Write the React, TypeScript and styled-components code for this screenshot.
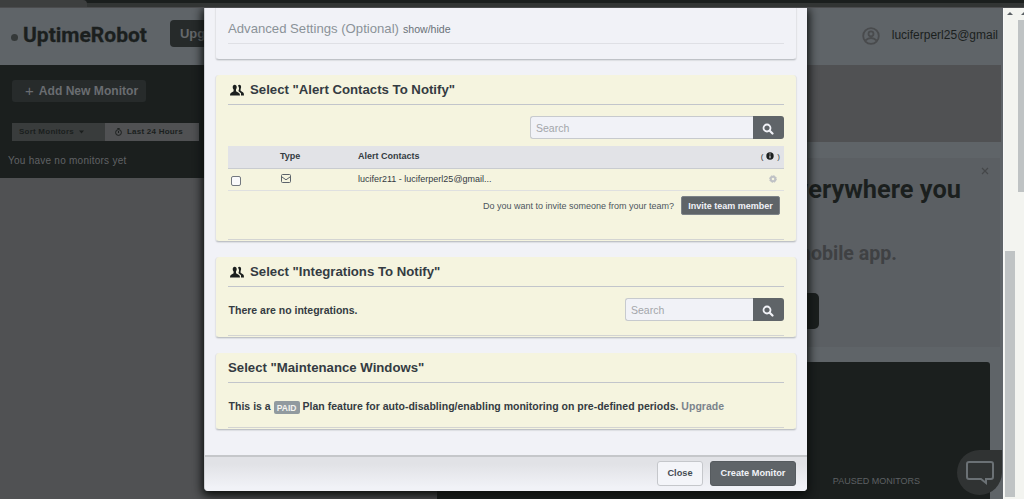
import React from "react";
import styled, { createGlobalStyle } from "styled-components";

const c = {
  ink: "#1b1f1e",
  coal: "#505153",
  slate: "#5f6468",
  paper: "#f1f2f7",
  mist: "#e2e3e7",
  line: "#c2c5cb",
  cream: "#f5f4df",
  text: "#343b42",
};

const Global = createGlobalStyle`
  * { box-sizing: border-box; }
  html, body { margin: 0; padding: 0; overflow: hidden; }
  body { font-family: "Liberation Sans", Arial, sans-serif; color: ${c.text}; }
  h1, h2, h3, p { margin: 0; }
  button, input { font-family: inherit; }
`;

const Screen = styled.div`
  position: relative;
  display: flex;
  flex-direction: column;
  width: 1024px;
  height: 499px;
  overflow: hidden;
  background: ${c.slate};
`;

const BrowserEdge = styled.div`
  flex: none;
  display: flex;
  height: 8px;
  background: linear-gradient(${c.ink} 0 3px, #323534 3px 7px, #4b4c4e 7px);
`;
const BrowserTab = styled.div`
  width: 87px;
  height: 7px;
  background: #3d3f3f;
  border-top-right-radius: 4px;
`;

const Viewport = styled.div`
  flex: 1;
  min-height: 0;
  display: flex;
`;

const Page = styled.div`
  width: 1003px;
  display: flex;
  flex-direction: column;
`;

const Header = styled.header`
  flex: none;
  height: 57px;
  padding: 0 5px 3px 11px;
  display: flex;
  align-items: center;
  background: ${c.slate};
`;
const LogoDot = styled.span`
  width: 7px;
  height: 7px;
  margin: 5px 5px 0 0;
  border-radius: 50%;
  background: #353939;
`;
const Logo = styled.span`
  font: 700 21px/26px Roboto, sans-serif;
  -webkit-text-stroke: 0.3px ${c.ink};
  color: ${c.ink};
`;
const UpgradeButton = styled.span`
  margin: -3px 0 0 23px;
  width: 110px;
  height: 27px;
  padding-left: 10px;
  border-radius: 4px;
  background: #262a2a;
  color: #65686b;
  font: 700 13px/27px "Liberation Sans", sans-serif;
`;
const Account = styled.div`
  margin-left: auto;
  display: flex;
  align-items: center;
  gap: 12px;
  font: 400 12px/16px "Liberation Sans", sans-serif;
  color: ${c.ink};
  svg { display: block; margin-top: 2px; }
`;

const Columns = styled.div`
  flex: 1;
  display: flex;
  min-height: 0;
`;
const Sidebar = styled.aside`
  width: 437px;
  background: ${c.coal};
`;
const SidebarTop = styled.div`
  height: 113px;
  padding: 15px 0 0 12px;
  background: ${c.ink};
`;
const AddMonitor = styled.div`
  width: 134px;
  height: 22px;
  padding-left: 13px;
  display: flex;
  align-items: center;
  gap: 5px;
  border-radius: 3px;
  background: #272b2b;
  color: #6a6d71;
  font: 700 12.1px/22px "Liberation Sans", sans-serif;
  span { font-size: 15px; font-weight: 400; }
`;
const Filters = styled.div`
  display: flex;
  margin-top: 21px;
  font: 700 8px/18px "Liberation Sans", sans-serif;
  letter-spacing: 0.23px;
  color: ${c.ink};
`;
const Filter = styled.div<{ $w: number; $dim?: boolean }>`
  display: flex;
  align-items: center;
  gap: 5px;
  width: ${(p) => p.$w}px;
  height: 18px;
  padding-left: ${(p) => (p.$dim ? 7 : 10)}px;
  background: ${(p) => (p.$dim ? "#393c3c" : c.coal)};
  white-space: nowrap;
`;
const EmptyNote = styled.p`
  margin: 13px 0 0 -4px;
  font: 400 10px/14px "Liberation Sans", sans-serif;
  letter-spacing: 0.25px;
  color: #606265;
`;

const Main = styled.main`
  flex: 1;
  display: flex;
  flex-direction: column;
  align-items: stretch;
`;
const Banner = styled.div`
  flex: none;
  height: 77px;
  margin-right: 2px;
  background: ${c.coal};
`;
const Promo = styled.section`
  flex: none;
  height: 189px;
  margin: 16px 3px 15px 0;
  padding: 8px 10px 0 0;
  display: flex;
  flex-direction: column;
  background: #5b5f63;
`;
const PromoClose = styled.svg`
  align-self: flex-end;
  display: block;
`;
const PromoTitle = styled.h1`
  width: 514px;
  margin: -2px 0 0 10px;
  text-align: right;
  font: 700 25.4px/30px Roboto, sans-serif;
  white-space: nowrap;
  color: ${c.ink};
`;
const PromoText = styled.p`
  width: 460px;
  margin-top: 38px;
  text-align: right;
  font: 700 19.6px/24px Roboto, sans-serif;
  color: #3f4143;
`;
const StoreButton = styled.div`
  width: 140px;
  height: 36px;
  margin: 27px 0 0 242px;
  border-radius: 5px;
  background: ${c.ink};
`;
const Stats = styled.section`
  flex: 1;
  margin-right: 13px;
  padding: 112px 70px 0 0;
  border-radius: 3px 3px 0 0;
  background: ${c.ink};
  text-align: right;
  font: 400 9px/14px "Liberation Sans", sans-serif;
  color: #5d6063;
`;

const Scrollbars = styled.div`
  width: 21px;
  display: flex;
  gap: 3px;
  padding-left: 1px;
  background: #f3f4f0;
  border-left: 1px solid #f7f8f8;
`;
const Track = styled.div<{ $w: number; $gap: number; $h: number }>`
  flex: none;
  width: ${(p) => p.$w}px;
  overflow: hidden;
  &::before {
    content: "";
    display: block;
    margin: 4px 0 0 ${(p) => (p.$w > 8 ? 2 : 3)}px;
    width: 0;
    border: 3px solid transparent;
    border-top: 0;
    border-bottom-color: #5b6064;
  }
  &::after {
    content: "";
    display: block;
    margin-top: ${(p) => p.$gap}px;
    height: ${(p) => p.$h}px;
    background: #bfc3c4;
  }
`;

const Modal = styled.div`
  position: absolute;
  left: 204px;
  top: 8px;
  width: 603px;
  height: 483px;
  display: flex;
  flex-direction: column;
  background: ${c.paper};
  border-left: 1px solid #cfd1d5;
  border-radius: 0 0 4px 4px;
  box-shadow: 0 3px 10px 2px #0c0f0e;
  clip-path: inset(0 -30px -30px -30px);
`;
const Cards = styled.div`
  flex: 1;
  padding: 0 10px;
`;
const Card = styled.section<{ $h: number; $plain?: boolean }>`
  height: ${(p) => p.$h}px;
  margin-bottom: 15px;
  padding: 0 12px;
  display: flex;
  flex-direction: column;
  background: ${(p) => (p.$plain ? c.paper : c.cream)};
  border: 1px solid ${c.mist};
  border-top: 0;
  border-bottom: 1px solid #bfc2c7;
  border-radius: ${(p) => (p.$plain ? "0 0 4px 4px" : "4px")};
  box-shadow: 0 1px 1px #dcdee2;
  &::after {
    content: "";
    margin-top: auto;
    border-bottom: ${(p) => (p.$plain ? 0 : 1)}px solid #d3d4d2;
    margin-bottom: 1px;
  }
`;
const Advanced = styled.h3`
  display: flex;
  align-items: baseline;
  gap: 4px;
  height: 36px;
  padding-top: 13px;
  border-bottom: 1px solid #dfe0e5;
  font-size: 13.15px;
  line-height: 16px;
  font-weight: 400;
  color: #8b9299;
  small { font-size: 10.6px; color: #6a7178; }
`;
const Title = styled.h2`
  flex: none;
  display: flex;
  align-items: center;
  gap: 6px;
  height: 30px;
  border-bottom: 1px solid ${c.line};
  font-size: 13.2px;
  line-height: 28px;
  font-weight: 700;
  white-space: nowrap;
  svg { display: block; margin-left: 2px; }
`;
const SearchBox = styled.div<{ $w: number }>`
  display: flex;
  width: ${(p) => p.$w}px;
  height: 23px;
`;
const SearchInput = styled.input`
  flex: 1;
  min-width: 0;
  height: 23px;
  padding: 0 5px;
  border: 1px solid #c7cace;
  border-right: 0;
  border-radius: 3px 0 0 3px;
  background: ${c.paper};
  font-size: 10.5px;
  &::placeholder { color: #a3a6aa; opacity: 1; }
`;
const SearchButton = styled.button`
  width: 31px;
  height: 23px;
  padding: 2px 1px 0 0;
  display: flex;
  align-items: center;
  justify-content: center;
  border: 0;
  border-radius: 0 3px 3px 0;
  background: ${c.slate};
`;
const SearchRow = styled.div`
  display: flex;
  justify-content: space-between;
  align-items: center;
  margin-top: 11px;
`;
const Row = styled.div<{ $head?: boolean }>`
  display: grid;
  grid-template-columns: 52px 78px 1fr auto;
  align-items: center;
  height: ${(p) => (p.$head ? 23 : 22)}px;
  margin-top: ${(p) => (p.$head ? 7 : 0)}px;
  padding: 0 4px 2px 0;
  background: ${(p) => (p.$head ? c.mist : "transparent")};
  border-bottom: 1px solid ${(p) => (p.$head ? "#c9ccd0" : "#dfe0e0")};
  font-size: 9px;
  font-weight: ${(p) => (p.$head ? 700 : 400)};
  svg { display: block; }
`;
const Check = styled.input`
  appearance: none;
  width: 10px;
  height: 10px;
  margin: 4px 0 0 3px;
  border: 1px solid #73787f;
  border-radius: 2px;
  background: #fafafb;
`;
const InfoHint = styled.span`
  display: flex;
  align-items: center;
  gap: 3px;
  font-weight: 400;
  font-size: 8px;
`;
const Invite = styled.div`
  display: flex;
  justify-content: flex-end;
  align-items: center;
  gap: 7px;
  margin: 5px 4px 0 0;
  font-size: 9px;
  color: #4c545d;
`;
const InviteButton = styled.button`
  width: 99px;
  height: 19px;
  padding: 0;
  border: 1px solid #7c8287;
  border-radius: 2px;
  background: ${c.slate};
  color: ${c.paper};
  font-size: 9px;
  font-weight: 700;
`;
const Strong = styled.p`
  padding: 1px 0 0 0.6px;
  font-size: 10.5px;
  line-height: 15px;
  font-weight: 700;
  white-space: nowrap;
`;
const PlanNote = styled(Strong)`
  margin-top: 15px;
  letter-spacing: 0.01px;
  a { color: #7b838c; }
`;
const Paid = styled.span`
  display: inline-block;
  width: 26px;
  height: 13px;
  border-radius: 2px;
  background: #919a9f;
  color: #f4f4ef;
  font-size: 8.5px;
  line-height: 14px;
  text-align: center;
  vertical-align: -1px;
`;
const Footer = styled.footer`
  flex: none;
  height: 36px;
  display: flex;
  justify-content: flex-end;
  align-items: flex-start;
  gap: 7px;
  padding: 4px 11px 0 0;
  border-top: 2px solid #c5c7ca;
  border-radius: 0 0 4px 4px;
  background: linear-gradient(#e1e2e6 20%, ${c.paper} 90%);
`;
const FooterButton = styled.button<{ $w: number; $primary?: boolean }>`
  width: ${(p) => p.$w}px;
  height: 25px;
  padding: 0 0 1px;
  border: 1px solid ${(p) => (p.$primary ? "#565b5f" : "#c5c7cb")};
  border-radius: 3px;
  background: ${(p) => (p.$primary ? c.slate : "#f4f5f9")};
  color: ${(p) => (p.$primary ? c.paper : "#454c53")};
  font-size: 9.2px;
  font-weight: 700;
`;
const Chat = styled.div`
  position: absolute;
  left: 957px;
  top: 450px;
  width: 45px;
  height: 45px;
  display: flex;
  align-items: center;
  justify-content: center;
  border-radius: 50% 0 50% 50%;
  background: #303333;
`;

const People = () => (
  <svg width="14" height="12" viewBox="0 0 14 12" fill={c.ink}>
    <path d="M8 1.5Q9.4-.1 10.8 1.6 11.5 3.2 10.6 5V6.8L13.2 8.6Q14 9.2 14 11.4H11V9.2L8.6 7.2V6.2Q9.8 4.4 8 1.5Z" />
    <path d="M3 1.8Q4.7-.4 6.4 1.8 7.2 3.8 6 5.5V7.3L9 9Q10 9.7 10 11.6H0Q0 9.6 .8 9L3.6 7.3V5.5Q2.2 3.8 3 1.8Z" />
  </svg>
);
const Magnifier = () => (
  <svg width="12" height="12" viewBox="0 0 12 12" fill="none" stroke={c.paper}>
    <circle cx="5" cy="5" r="3.5" strokeWidth="1.8" />
    <path d="M7.7 7.7L10.5 10.5" strokeWidth="2.2" strokeLinecap="round" />
  </svg>
);
const Search = ({ width }: { width: number }) => (
  <SearchBox $w={width}>
    <SearchInput placeholder="Search" />
    <SearchButton aria-label="Search">
      <Magnifier />
    </SearchButton>
  </SearchBox>
);

export default function App() {
  return (
    <>
      <Global />
      <Screen>
        <BrowserEdge>
          <BrowserTab />
        </BrowserEdge>
        <Viewport>
          <Page>
            <Header>
              <LogoDot />
              <Logo>UptimeRobot</Logo>
              <UpgradeButton>Upg</UpgradeButton>
              <Account>
                <svg width="18" height="18" viewBox="0 0 18 18" fill="none" stroke="#494b4d" strokeWidth="1.8">
                  <circle cx="9" cy="9" r="7.8" />
                  <circle cx="9" cy="6.8" r="2.5" />
                  <path d="M3.3 13.5Q9 8.5 14.7 13.5" />
                </svg>
                luciferperl25@gmail
              </Account>
            </Header>
            <Columns>
              <Sidebar>
                <SidebarTop>
                  <AddMonitor>
                    <span>+</span>Add New Monitor
                  </AddMonitor>
                  <Filters>
                    <Filter $w={93} $dim>
                      Sort Monitors
                      <svg width="5" height="4" viewBox="0 0 5 4">
                        <path d="M0 .5H5L2.5 3.5Z" fill={c.ink} />
                      </svg>
                    </Filter>
                    <Filter $w={94}>
                      <svg width="7" height="8" viewBox="0 0 7 8" fill="none" stroke={c.ink}>
                        <circle cx="3.5" cy="4.5" r="2.9" />
                        <path d="M3.5 5V3M2.3 .6H4.7" />
                      </svg>
                      Last 24 Hours
                    </Filter>
                  </Filters>
                  <EmptyNote>You have no monitors yet</EmptyNote>
                </SidebarTop>
              </Sidebar>
              <Main>
                <Banner />
                <Promo>
                  <PromoClose width="10" height="10" viewBox="0 0 10 10" stroke="#454749" strokeWidth="1.2">
                    <path d="M2 2L8 8M8 2L2 8" />
                  </PromoClose>
                  <PromoTitle>everywhere you</PromoTitle>
                  <PromoText>mobile app.</PromoText>
                  <StoreButton />
                </Promo>
                <Stats>PAUSED MONITORS</Stats>
              </Main>
            </Columns>
          </Page>
          <Scrollbars>
            <Track $w={10} $gap={236} $h={246} />
            <Track $w={8} $gap={5} $h={172} />
          </Scrollbars>
        </Viewport>

        <Modal>
          <Cards>
            <Card $h={52} $plain>
              <Advanced>
                Advanced Settings (Optional) <small>show/hide</small>
              </Advanced>
            </Card>
            <Card $h={167}>
              <Title>
                <People />
                Select "Alert Contacts To Notify"
              </Title>
              <SearchRow>
                <span />
                <Search width={254} />
              </SearchRow>
              <Row $head>
                <span />
                <span>Type</span>
                <span>Alert Contacts</span>
                <InfoHint>
                  (
                  <svg width="8" height="8" viewBox="0 0 8 8">
                    <circle cx="4" cy="4" r="3.7" fill={c.ink} />
                    <path d="M4 1.6V2.5M4 3.5V6.2" stroke="#e2e3e7" strokeWidth="1.1" />
                  </svg>
                  )
                </InfoHint>
              </Row>
              <Row>
                <Check type="checkbox" />
                <svg width="12" height="9" viewBox="0 0 12 9" fill="none" stroke="#5b626a">
                  <rect x="1.5" y=".5" width="9" height="8" rx="1" />
                  <path d="M2 3L6 5.8 10 3" />
                </svg>
                <span>lucifer211 - luciferperl25@gmail...</span>
                <svg width="14" height="8" viewBox="0 0 14 8" fill="none" stroke="#bfc1c5">
                  <circle cx="7" cy="4" r="2.3" strokeWidth="2" />
                  <circle cx="7" cy="4" r="3.4" strokeWidth="1" strokeDasharray="1.4 1.27" />
                </svg>
              </Row>
              <Invite>
                Do you want to invite someone from your team?
                <InviteButton>Invite team member</InviteButton>
              </Invite>
            </Card>
            <Card $h={81}>
              <Title>
                <People />
                Select "Integrations To Notify"
              </Title>
              <SearchRow>
                <Strong>There are no integrations.</Strong>
                <Search width={159} />
              </SearchRow>
            </Card>
            <Card $h={77}>
              <Title>Select "Maintenance Windows"</Title>
              <PlanNote>
                This is a <Paid>PAID</Paid> Plan feature for auto-disabling/enabling monitoring on pre-defined periods.{" "}
                <a>Upgrade</a>
              </PlanNote>
            </Card>
          </Cards>
          <Footer>
            <FooterButton $w={46}>Close</FooterButton>
            <FooterButton $w={86} $primary>
              Create Monitor
            </FooterButton>
          </Footer>
        </Modal>
        <Chat>
          <svg width="30" height="26" viewBox="0 0 30 26" fill="none" stroke="#6b7175" strokeWidth="2">
            <path d="M4 2H26Q28 2 28 4V17Q28 19 26 19H21V23L16 19H4Q2 19 2 17V4Q2 2 4 2Z" />
          </svg>
        </Chat>
      </Screen>
    </>
  );
}
